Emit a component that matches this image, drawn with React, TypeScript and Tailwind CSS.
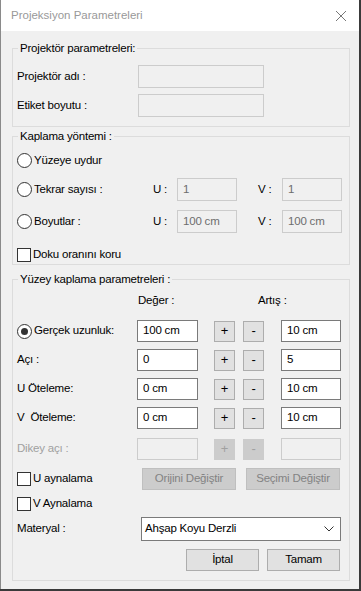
import React from 'react';

const font = { fontFamily: '"Liberation Sans", Arial, sans-serif' };

const Field: React.FC<{ value?: string; width: string; disabled?: boolean; h?: string }> = ({ value = '', width, disabled, h = 'h-[22px]' }) => (
    <div
        className={`${width} ${h} flex items-center px-[5px] border ${disabled ? 'border-[#cccccc] bg-[#f0f0f0] text-[#6d6d6d]' : 'border-[#7a7a7a] bg-white text-black'}`}
    >
        {value}
    </div>
);

const Radio: React.FC<{ checked?: boolean; label: string; w?: string }> = ({ checked, label, w = 'w-[136px]' }) => (
    <div className={`flex items-center ${w}`}>
        <span className="size-[15px] rounded-full border border-[#333] bg-white flex items-center justify-center mr-[2px]">
            {checked && <span className="size-[7px] rounded-full bg-[#333]"></span>}
        </span>
        <span>{label}</span>
    </div>
);

const Check: React.FC<{ label: string }> = ({ label }) => (
    <div className="flex items-center">
        <span className="size-[14px] border border-[#333] bg-white mr-[2px]"></span>
        <span>{label}</span>
    </div>
);

const StepButton: React.FC<{ sign: string; disabled?: boolean }> = ({ sign, disabled }) => (
    <div
        className={`w-[21px] h-[21px] flex items-center justify-center border text-[13px] ${disabled ? 'bg-[#cccccc] border-[#cccccc] text-[#a0a0a0]' : 'bg-[#e1e1e1] border-[#adadad] text-black'}`}
    >
        {sign}
    </div>
);

const ValueRow: React.FC<{ label: React.ReactNode; value: string; step: string; disabled?: boolean; mt: string }> = ({ label, value, step, disabled, mt }) => (
    <div className={`flex items-center h-[22px] ${mt}`}>
        <div className={`w-[120px] ${disabled ? 'text-[#a0a0a0]' : ''}`}>{label}</div>
        <Field value={value} width="w-[61px]" disabled={disabled} />
        <div className="ml-[16px]"><StepButton sign="+" disabled={disabled} /></div>
        <div className="ml-[8px]"><StepButton sign="-" disabled={disabled} /></div>
        <div className="ml-[17px]"><Field value={step} width="w-[60px]" disabled={disabled} /></div>
    </div>
);

const Legend: React.FC<{ children: React.ReactNode }> = ({ children }) => (
    <legend className="ml-[1px] px-[2px] leading-[15px]">{children}</legend>
);

const App: React.FC = () => {
    return (
        <div className="w-[361px] h-[591px] bg-[#3a3a3a] text-[11.5px] tracking-[-0.2px] text-black" style={font}>
            <div className="w-[359px] h-[589px] bg-[#f0f0f0] border-l border-[#8a8a8a]">
                {/* Title bar */}
                <div className="h-[31px] bg-white flex items-center justify-between pl-[10px] pr-[9px]">
                    <span className="text-[11.5px] tracking-normal text-[#999999]">Projeksiyon Parametreleri</span>
                    <svg width="12" height="12" viewBox="0 0 12 12" className="mr-[3px]">
                        <path d="M1 1 L11 11 M11 1 L1 11" stroke="#777" strokeWidth="1" />
                    </svg>
                </div>

                {/* Projektör parametreleri */}
                <fieldset className="ml-[11px] mt-[10px] w-[338px] border border-[#dcdcdc] pl-[4px] pt-[9px] pb-[9px]">
                    <Legend>Projektör parametreleri:</Legend>
                    <div className="flex items-center h-[23px]">
                        <div className="w-[121px]">Projektör adı :</div>
                        <Field width="w-[126px]" h="h-[23px]" disabled />
                    </div>
                    <div className="flex items-center h-[23px] mt-[6px]">
                        <div className="w-[121px]">Etiket boyutu :</div>
                        <Field width="w-[126px]" h="h-[23px]" disabled />
                    </div>
                </fieldset>

                {/* Kaplama yöntemi */}
                <fieldset className="ml-[11px] mt-[2px] w-[338px] border border-[#dcdcdc] pl-[4px] pb-[2px]">
                    <Legend>Kaplama yöntemi :</Legend>
                    <div className="flex items-center h-[23px] mt-[5px]">
                        <Radio label="Yüzeye uydur" />
                    </div>
                    <div className="flex items-center h-[23px] mt-[6px]">
                        <Radio label="Tekrar sayısı :" />
                        <div className="w-[24px]">U :</div>
                        <Field value="1" width="w-[60px]" h="h-[23px]" disabled />
                        <div className="w-[24px] ml-[21px]">V :</div>
                        <Field value="1" width="w-[60px]" h="h-[23px]" disabled />
                    </div>
                    <div className="flex items-center h-[23px] mt-[9px]">
                        <Radio label="Boyutlar :" />
                        <div className="w-[24px]">U :</div>
                        <Field value="100 cm" width="w-[60px]" h="h-[23px]" disabled />
                        <div className="w-[24px] ml-[21px]">V :</div>
                        <Field value="100 cm" width="w-[60px]" h="h-[23px]" disabled />
                    </div>
                    <div className="flex items-center h-[15px] mt-[14px]">
                        <Check label="Doku oranını koru" />
                    </div>
                </fieldset>

                {/* Yüzey kaplama parametreleri */}
                <fieldset className="ml-[11px] mt-[7px] w-[338px] border border-[#dcdcdc] pl-[4px] pb-[9px]">
                    <Legend>Yüzey kaplama parametreleri :</Legend>
                    <div className="flex items-center h-[15px] mt-[6px]">
                        <div className="ml-[121px] w-[120px]">Değer :</div>
                        <div>Artış :</div>
                    </div>
                    <ValueRow mt="mt-[12px]" label={<Radio checked label="Gerçek uzunluk:" w="w-[120px]" />} value="100 cm" step="10 cm" />
                    <ValueRow mt="mt-[7px]" label="Açı :" value="0" step="5" />
                    <ValueRow mt="mt-[7px]" label="U Öteleme:" value="0 cm" step="10 cm" />
                    <ValueRow mt="mt-[7px]" label={<span className="whitespace-pre">V  Öteleme:</span>} value="0 cm" step="10 cm" />
                    <ValueRow mt="mt-[9px]" label="Dikey açı :" value="" step="" disabled />

                    <div className="flex items-center h-[22px] mt-[8px]">
                        <div className="w-[125px]"><Check label="U aynalama" /></div>
                        <div className="w-[94px] h-[22px] flex items-center justify-center bg-[#cccccc] border border-[#bfbfbf] text-[#838383]">Orijini Değiştir</div>
                        <div className="ml-[10px] w-[94px] h-[22px] flex items-center justify-center bg-[#cccccc] border border-[#bfbfbf] text-[#838383]">Seçimi Değiştir</div>
                    </div>
                    <div className="flex items-center h-[15px] mt-[6px]">
                        <Check label="V Aynalama" />
                    </div>
                    <div className="flex items-center h-[24px] mt-[6px]">
                        <div className="w-[124px]">Materyal :</div>
                        <div className="w-[200px] h-[24px] flex items-center justify-between border border-[#7a7a7a] bg-white pl-[3px] pr-[6px]">
                            <span>Ahşap Koyu Derzli</span>
                            <svg width="10" height="6" viewBox="0 0 10 6">
                                <path d="M0.5 0.5 L5 5 L9.5 0.5" fill="none" stroke="#333" strokeWidth="1" />
                            </svg>
                        </div>
                    </div>
                    <div className="flex items-center h-[22px] mt-[8px] pl-[169px] gap-[8px]">
                        <div className="w-[73px] h-[22px] flex items-center justify-center bg-[#e1e1e1] border border-[#adadad]">İptal</div>
                        <div className="w-[73px] h-[22px] flex items-center justify-center bg-[#e1e1e1] border border-[#adadad]">Tamam</div>
                    </div>
                </fieldset>
            </div>
        </div>
    );
};

export default App;
